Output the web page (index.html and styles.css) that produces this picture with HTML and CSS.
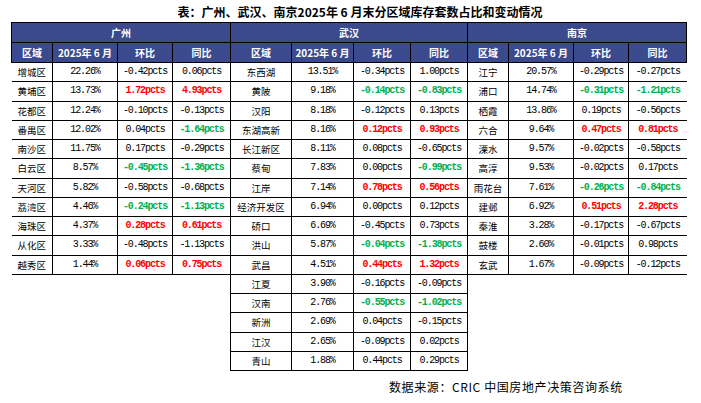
FILE: index.html
```html
<!DOCTYPE html>
<html lang="zh">
<head>
<meta charset="utf-8">
<link rel="stylesheet" href="styles.css">
</head>
<body>
<div class="title">表：广州、武汉、南京2025年 6 月末分区域库存套数占比和变动情况</div>
<div class="wrap">
<table class="grid">
<colgroup>
<col class="c41"><col class="c65"><col class="c55"><col class="c58">
<col class="c61"><col class="c62"><col class="c57"><col class="c57">
<col class="c41"><col class="c65"><col class="c55"><col class="c58">
</colgroup>
<thead>
<tr class="h1"><th colspan="4">广州</th><th colspan="4">武汉</th><th colspan="4">南京</th></tr>
<tr class="h2">
<th>区域</th><th>2025年 6 月</th><th>环比</th><th>同比</th>
<th>区域</th><th>2025年 6 月</th><th>环比</th><th>同比</th>
<th>区域</th><th>2025年 6 月</th><th>环比</th><th>同比</th>
</tr>
</thead>
<tbody>
<tr><td class="n fl">增城区</td><td>22.26%</td><td>-0.42pcts</td><td>0.06pcts</td><td class="n">东西湖</td><td>13.51%</td><td>-0.34pcts</td><td>1.00pcts</td><td class="n">江宁</td><td>20.57%</td><td>-0.29pcts</td><td class="lr">-0.27pcts</td></tr>
<tr><td class="n fl">黄埔区</td><td>13.73%</td><td class="r">1.72pcts</td><td class="r">4.93pcts</td><td class="n">黄陂</td><td>9.18%</td><td class="g">-0.14pcts</td><td class="g">-0.83pcts</td><td class="n">浦口</td><td>14.74%</td><td class="g">-0.31pcts</td><td class="g lr">-1.21pcts</td></tr>
<tr><td class="n fl">花都区</td><td>12.24%</td><td>-0.10pcts</td><td>-0.13pcts</td><td class="n">汉阳</td><td>8.18%</td><td>-0.12pcts</td><td>0.13pcts</td><td class="n">栖霞</td><td>13.86%</td><td>0.19pcts</td><td class="lr">-0.56pcts</td></tr>
<tr><td class="n fl">番禺区</td><td>12.02%</td><td>0.04pcts</td><td class="g">-1.64pcts</td><td class="n">东湖高新</td><td>8.16%</td><td class="r">0.12pcts</td><td class="r">0.93pcts</td><td class="n">六合</td><td>9.64%</td><td class="r">0.47pcts</td><td class="r lr">0.81pcts</td></tr>
<tr><td class="n fl">南沙区</td><td>11.75%</td><td>0.17pcts</td><td>-0.29pcts</td><td class="n">长江新区</td><td>8.11%</td><td>0.08pcts</td><td>-0.65pcts</td><td class="n">溧水</td><td>9.57%</td><td>-0.02pcts</td><td class="lr">-0.58pcts</td></tr>
<tr><td class="n fl">白云区</td><td>8.57%</td><td class="g">-0.45pcts</td><td class="g">-1.36pcts</td><td class="n">蔡甸</td><td>7.83%</td><td>0.00pcts</td><td class="g">-0.99pcts</td><td class="n">高淳</td><td>9.53%</td><td>-0.02pcts</td><td class="lr">0.17pcts</td></tr>
<tr><td class="n fl">天河区</td><td>5.82%</td><td>-0.58pcts</td><td>-0.68pcts</td><td class="n">江岸</td><td>7.14%</td><td class="r">0.78pcts</td><td class="r">0.56pcts</td><td class="n">雨花台</td><td>7.61%</td><td class="g">-0.26pcts</td><td class="g lr">-0.84pcts</td></tr>
<tr><td class="n fl">荔湾区</td><td>4.46%</td><td class="g">-0.24pcts</td><td class="g">-1.13pcts</td><td class="n">经济开发区</td><td>6.94%</td><td>0.00pcts</td><td>0.12pcts</td><td class="n">建邺</td><td>6.92%</td><td class="r">0.51pcts</td><td class="r lr">2.28pcts</td></tr>
<tr><td class="n fl">海珠区</td><td>4.37%</td><td class="r">0.28pcts</td><td class="r">0.61pcts</td><td class="n">硚口</td><td>6.69%</td><td>-0.45pcts</td><td>0.73pcts</td><td class="n">秦淮</td><td>3.28%</td><td>-0.17pcts</td><td class="lr">-0.67pcts</td></tr>
<tr><td class="n fl">从化区</td><td>3.33%</td><td>-0.48pcts</td><td>-1.13pcts</td><td class="n">洪山</td><td>5.87%</td><td class="g">-0.04pcts</td><td class="g">-1.38pcts</td><td class="n">鼓楼</td><td>2.60%</td><td>-0.01pcts</td><td class="lr">0.98pcts</td></tr>
<tr><td class="n fl">越秀区</td><td>1.44%</td><td class="r">0.06pcts</td><td class="r">0.75pcts</td><td class="n">武昌</td><td>4.51%</td><td class="r">0.44pcts</td><td class="r">1.32pcts</td><td class="n">玄武</td><td>1.67%</td><td>-0.09pcts</td><td class="lr">-0.12pcts</td></tr>
<tr><td class="e"></td><td class="e"></td><td class="e"></td><td class="e"></td><td class="n">江夏</td><td>3.90%</td><td>-0.16pcts</td><td>-0.09pcts</td><td class="e"></td><td class="e"></td><td class="e"></td><td class="e"></td></tr>
<tr><td class="e"></td><td class="e"></td><td class="e"></td><td class="e"></td><td class="n">汉南</td><td>2.76%</td><td class="g">-0.55pcts</td><td class="g">-1.02pcts</td><td class="e"></td><td class="e"></td><td class="e"></td><td class="e"></td></tr>
<tr><td class="e"></td><td class="e"></td><td class="e"></td><td class="e"></td><td class="n">新洲</td><td>2.69%</td><td>0.04pcts</td><td>-0.15pcts</td><td class="e"></td><td class="e"></td><td class="e"></td><td class="e"></td></tr>
<tr><td class="e"></td><td class="e"></td><td class="e"></td><td class="e"></td><td class="n">江汉</td><td>2.65%</td><td>-0.09pcts</td><td>0.02pcts</td><td class="e"></td><td class="e"></td><td class="e"></td><td class="e"></td></tr>
<tr><td class="e"></td><td class="e"></td><td class="e"></td><td class="e"></td><td class="n">青山</td><td>1.88%</td><td>0.44pcts</td><td>0.29pcts</td><td class="e"></td><td class="e"></td><td class="e"></td><td class="e"></td></tr>
</tbody>
</table>
</div>
<div class="source">数据来源：CRIC 中国房地产决策咨询系统</div>
</body>
</html>
```
FILE: styles.css
```css
html, body {
  margin: 0;
  padding: 0;
  background: #ffffff;
}
body {
  width: 701px;
  height: 403px;
  overflow: hidden;
  font-family: "Noto Sans CJK SC", sans-serif;
  color: #000;
}
.title {
  height: 22px;
  line-height: 24px;
  padding-left: 19px;
  text-align: center;
  font-size: 12px;
  font-weight: 700;
  white-space: nowrap;
}
.wrap {
  padding-left: 11px;
}
.grid {
  border-collapse: collapse;
  table-layout: fixed;
  width: 675px;
}
.c41 { width: 41px; }
.c65 { width: 65px; }
.c55 { width: 55px; }
.c58 { width: 58px; }
.c61 { width: 61px; }
.c62 { width: 62px; }
.c57 { width: 57px; }
.grid th {
  background: #3a4a8c;
  color: #fff;
  font-family: "Noto Sans CJK SC", sans-serif;
  font-weight: 700;
  font-size: 10px;
  border: 1px solid #000;
  padding: 0;
  height: 19px;
  line-height: 12px;
  text-align: center;
  white-space: nowrap;
}
.grid tbody tr {
  height: 19.25px;
}
.grid td {
  border: 1px solid #000;
  padding: 0;
  text-align: center;
  vertical-align: middle;
  font-family: "Liberation Mono", monospace;
  font-size: 10px;
  letter-spacing: -1.1px;
  line-height: 12px;
  white-space: nowrap;
}
.grid td.n {
  font-family: "Noto Sans CJK SC", sans-serif;
  font-size: 9.5px;
  letter-spacing: 0;
}
.grid td.fl { border-left: none; }
.grid td.lr { border-right: none; }
.grid td.e { border: none; }
.grid td.r { color: #ff0000; font-weight: 700; }
.grid td.g { color: #00b050; font-weight: 700; }
.source {
  margin-top: 8px;
  padding-left: 389px;
  font-size: 12px;
  letter-spacing: 0.6px;
  line-height: 16px;
  white-space: nowrap;
}
```
